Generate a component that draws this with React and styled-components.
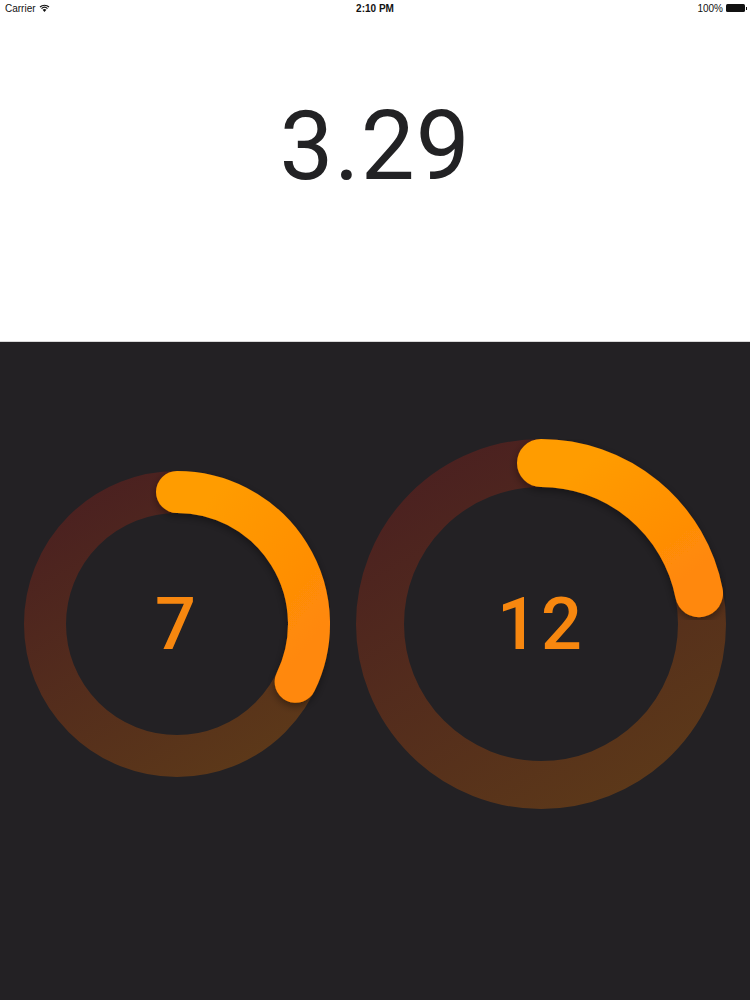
import styled, { createGlobalStyle } from "styled-components";

const GlobalStyle = createGlobalStyle`
  html, body {
    margin: 0;
    padding: 0;
    background: #232124;
  }
  * {
    box-sizing: border-box;
  }
`;

const Page = styled.div`
  width: 750px;
  height: 1000px;
  display: flex;
  flex-direction: column;
  overflow: hidden;
`;

const TopPanel = styled.div`
  height: 342px;
  background: #ffffff;
  display: flex;
  flex-direction: column;
  border-bottom: 1px solid #d8d8d8;
`;

const StatusBar = styled.div`
  height: 16px;
  padding: 0 5px;
  display: grid;
  grid-template-columns: 1fr auto 1fr;
  align-items: center;
  font-family: "Liberation Sans", Arial, sans-serif;
  font-size: 10px;
  color: #111;
`;

const StatusLeft = styled.div`
  display: flex;
  align-items: center;
  gap: 3px;
`;

const StatusTime = styled.div`
  font-weight: 700;
  font-size: 10px;
`;

const StatusRight = styled.div`
  display: flex;
  align-items: center;
  justify-content: flex-end;
  gap: 3px;
`;

const Battery = styled.div`
  width: 19px;
  height: 8px;
  border-radius: 1.5px;
  background: #111;
  position: relative;

  &::after {
    content: "";
    position: absolute;
    right: -2px;
    top: 2.5px;
    width: 1.5px;
    height: 3px;
    background: #111;
  }
`;

const BigNumber = styled.div`
  margin-top: 75px;
  text-align: center;
  font-family: Roboto, "Liberation Sans", sans-serif;
  font-weight: 400;
  font-size: 96px;
  line-height: 110px;
  color: #222224;
  letter-spacing: 1px;
`;

const BottomPanel = styled.div`
  flex: 1;
  background: #232124;
  display: flex;
  justify-content: center;
  align-items: flex-start;
  padding-top: 97px;
  gap: 26px;
`;

const RingBox = styled.div`
  position: relative;
  width: ${(p) => p.size}px;
  height: ${(p) => p.size}px;
  margin-top: ${(p) => p.offset}px;
`;

const RingLabel = styled.div`
  position: absolute;
  inset: 0;
  display: flex;
  align-items: center;
  justify-content: center;
  font-family: Roboto, "Liberation Sans", sans-serif;
  font-weight: 500;
  font-size: 72px;
  color: #f7870f;
  letter-spacing: 3px;
`;

const Wifi = () => (
  <svg width="11" height="8" viewBox="0 0 11 8">
    <path d="M5.5 8 L3.6 5.8 A2.8 2.8 0 0 1 7.4 5.8 Z" fill="#111" />
    <path d="M2.5 4.6 A4.4 4.4 0 0 1 8.5 4.6" stroke="#111" strokeWidth="1.2" fill="none" />
    <path d="M1 3 A6.6 6.6 0 0 1 10 3" stroke="#111" strokeWidth="1.2" fill="none" />
  </svg>
);

function Ring({ id, size, width, angle, label, offset }) {
  const c = size / 2;
  const r = (size - width) / 2;
  const a = (angle * Math.PI) / 180;
  const ex = c + r * Math.sin(a);
  const ey = c - r * Math.cos(a);
  const large = angle > 180 ? 1 : 0;
  return (
    <RingBox size={size} offset={offset}>
      <svg width={size} height={size} viewBox={`0 0 ${size} ${size}`}>
        <defs>
          <linearGradient id={`${id}-track`} x1="0.2" y1="0" x2="0.8" y2="1">
            <stop offset="0" stopColor="#4b2120" />
            <stop offset="1" stopColor="#5c3819" />
          </linearGradient>
          <linearGradient id={`${id}-prog`} x1="0.3" y1="0" x2="1" y2="0.8">
            <stop offset="0" stopColor="#ff9c00" />
            <stop offset="1" stopColor="#ff8808" />
          </linearGradient>
          <filter id={`${id}-shadow`} x="-20%" y="-20%" width="140%" height="140%">
            <feDropShadow dx="0" dy="3" stdDeviation="4" floodColor="#000" floodOpacity="0.4" />
          </filter>
        </defs>
        <circle cx={c} cy={c} r={r} fill="none" stroke={`url(#${id}-track)`} strokeWidth={width} />
        <path
          d={`M ${c} ${c - r} A ${r} ${r} 0 ${large} 1 ${ex} ${ey}`}
          fill="none"
          stroke={`url(#${id}-prog)`}
          strokeWidth={width}
          strokeLinecap="round"
          filter={`url(#${id}-shadow)`}
        />
      </svg>
      <RingLabel>{label}</RingLabel>
    </RingBox>
  );
}

export default function App() {
  return (
    <Page>
      <GlobalStyle />
      <TopPanel>
        <StatusBar>
          <StatusLeft>
            Carrier <Wifi />
          </StatusLeft>
          <StatusTime>2:10 PM</StatusTime>
          <StatusRight>
            100% <Battery />
          </StatusRight>
        </StatusBar>
        <BigNumber>3.29</BigNumber>
      </TopPanel>
      <BottomPanel>
        <Ring id="small" size={306} width={42} angle={116} label="7" offset={32} />
        <Ring id="large" size={370} width={48} angle={79} label="12" offset={0} />
      </BottomPanel>
    </Page>
  );
}
